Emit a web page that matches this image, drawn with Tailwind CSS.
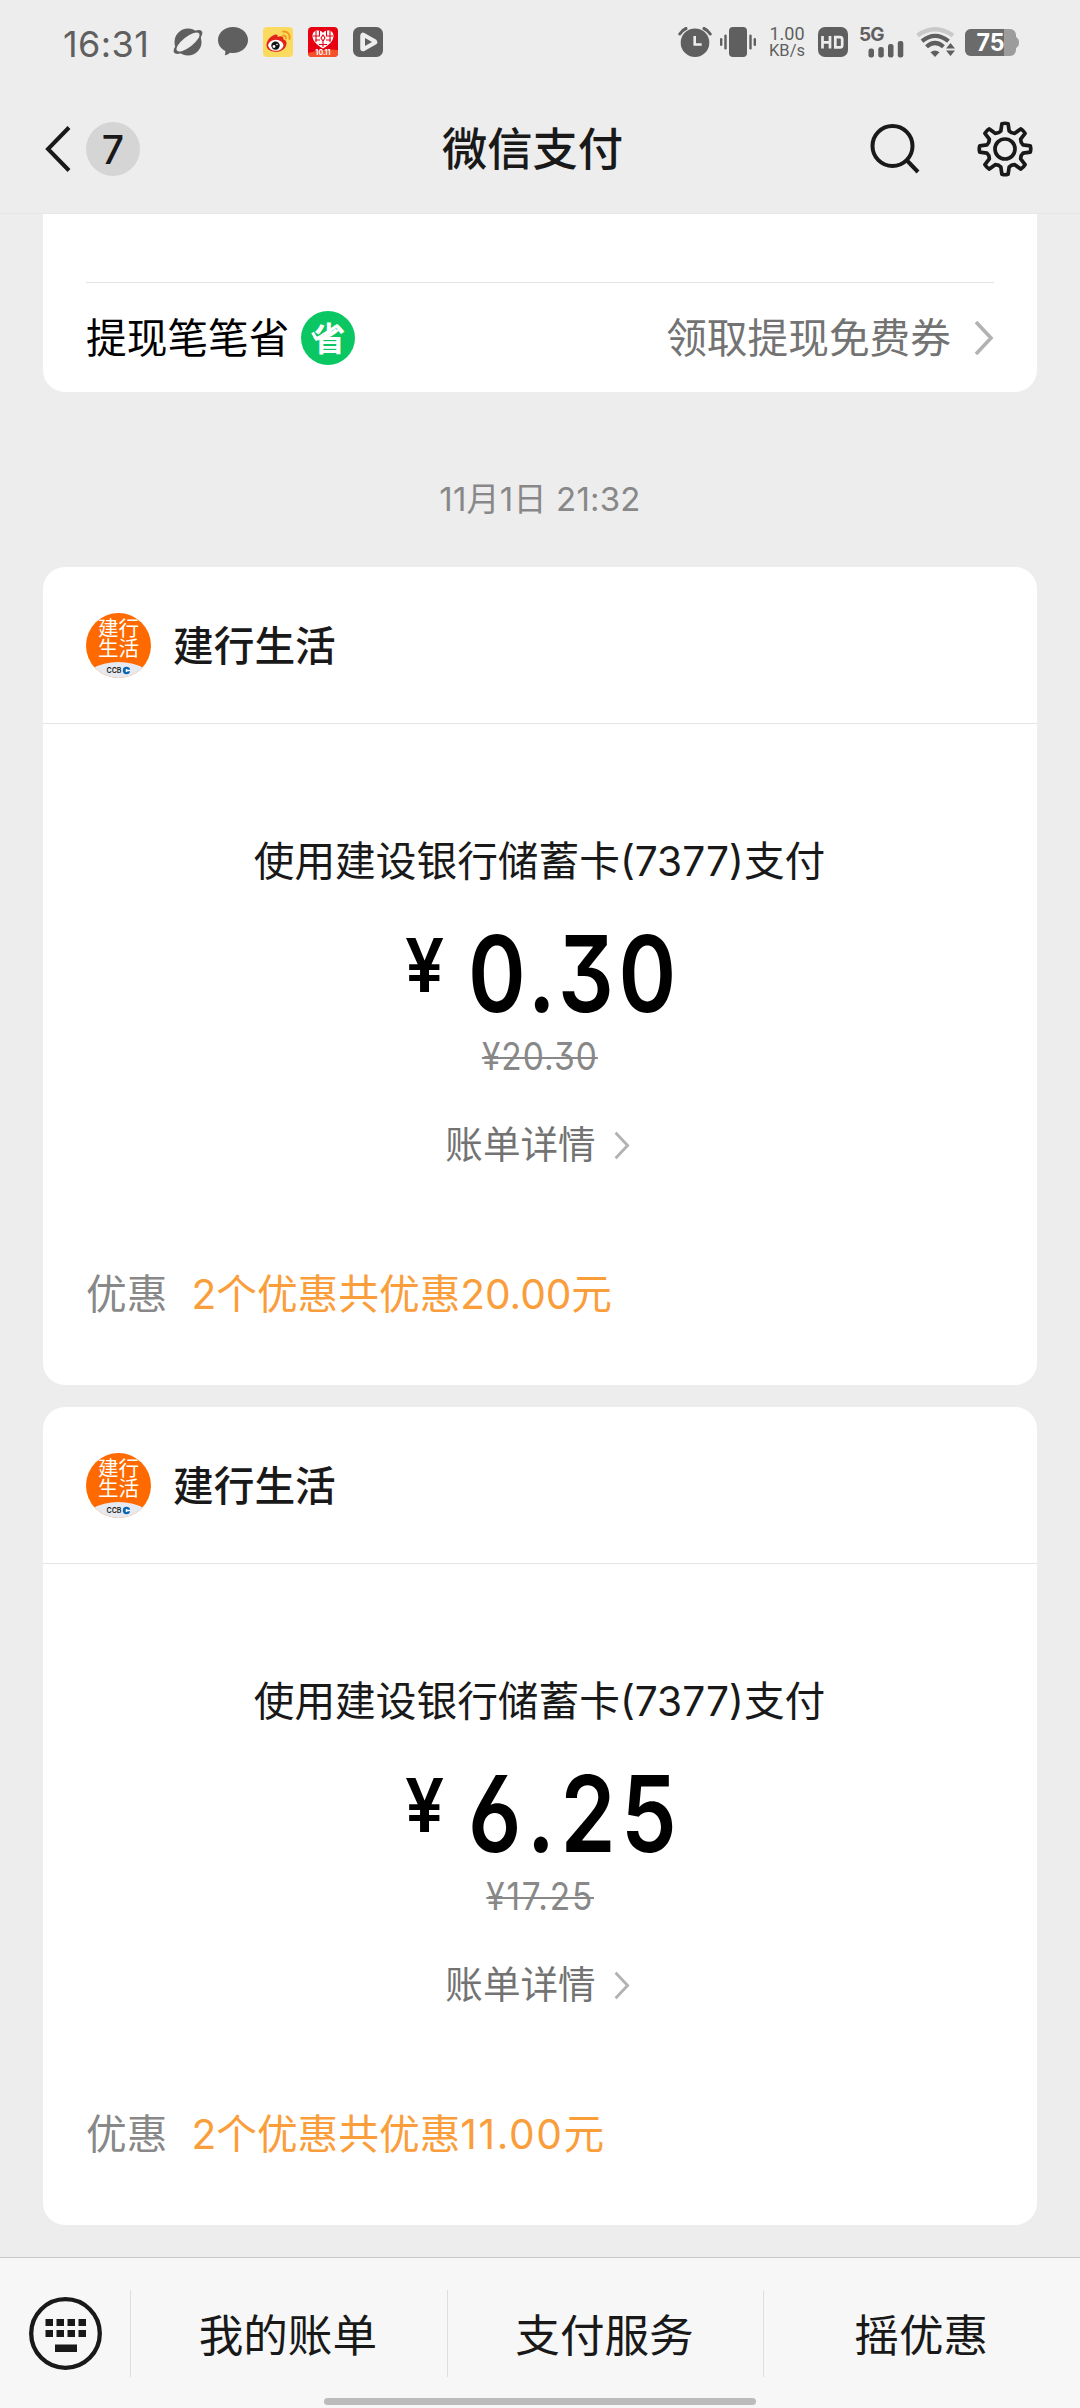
<!DOCTYPE html>
<html lang="zh-CN">
<head>
<meta charset="utf-8">
<title>微信支付</title>
<script src="https://cdn.jsdelivr.net/npm/@tailwindcss/browser@4"></script>
</head>
<body class="bg-[#ededed]">
<svg class="absolute w-0 h-0">
  <defs>
    <symbol id="chevron" viewBox="0 0 20 36"><path d="M2 2 17 18 2 34" fill="none" stroke="#b2b2b2" stroke-width="3.6"/></symbol>
    <clipPath id="disc"><circle cx="32.5" cy="32.5" r="32.5"/></clipPath>
    <symbol id="ccb" viewBox="0 0 65 65">
      <g clip-path="url(#disc)">
        <rect width="65" height="65" fill="#ff6a00"/>
        <ellipse cx="32.5" cy="71" rx="37" ry="22" fill="#e6eaf0"/>
        <g fill="#fff" font-family="Noto Sans CJK SC, sans-serif" font-size="20.5">
          <text x="12" y="22.500">建行</text>
          <text x="12" y="43">生活</text>
        </g>
        <text x="20.500" y="60" font-family="Inter, sans-serif" font-weight="600" font-size="7.500" fill="#222" textLength="15" lengthAdjust="spacingAndGlyphs">CCB</text>
        <circle cx="40.5" cy="57.5" r="3.7" fill="#0a66b0"/>
        <path d="M40 57.500h4.500M40.500 56v3" stroke="#fff" stroke-width="1.500"/>
      </g>
    </symbol>
  </defs>
</svg>

<div class="w-[1080px] h-[2408px] flex flex-col overflow-hidden bg-[#ededed] text-[#191919] font-[Inter,'Noto_Sans_CJK_SC',sans-serif]">

  <!-- status bar -->
  <div class="h-[84px] shrink-0 flex items-center pl-[63px] pr-[61px] text-[#5f5f5f]">
    <div class="w-[110px] pt-1 text-[36px] leading-[40px] tracking-[0.4px] whitespace-nowrap">16:31</div>
    <div class="flex items-center gap-[15px]">
      <svg class="w-[30px] h-[30px]" viewBox="0 0 30 30">
        <circle cx="15" cy="15" r="13.5" fill="#5f5f5f"/>
        <ellipse cx="15" cy="15" rx="17.5" ry="6.300" transform="rotate(-38 15 15)" fill="#5f5f5f"/>
        <ellipse cx="15" cy="15" rx="14" ry="5.200" transform="rotate(-38 15 15)" fill="#ededed"/>
      </svg>
      <svg class="w-[30px] h-[30px]" viewBox="0 0 30 30"><path d="M15 0c8.500 0 15 5.700 15 13s-6.500 13-15 13c-1 0-2 0-3-.3C10.500 27 8.500 28 6.800 28.300c.5-1.200.7-2.700.5-4.300C2.800 21.700 0 17.700 0 13 0 5.700 6.500 0 15 0Z" fill="#5f5f5f"/></svg>
      <svg class="w-[30px] h-[30px]" viewBox="0 0 30 30">
        <rect width="30" height="30" rx="4" fill="#fbdb5f"/>
        <path d="M3.500 18C3.500 13 9 8 12.500 7.500c2-.3 2.500 1 2 2.500 3-1.500 6.500-1 5.800 2.200 2.500.8 3.200 2.300 3.200 4 0 5-5 8.600-10.500 8.600S3.500 22.500 3.500 18Z" fill="#e2231a"/>
        <ellipse cx="12.800" cy="18.300" rx="7.600" ry="5.500" fill="#fff"/>
        <circle cx="12.500" cy="18.600" r="4.200" fill="#111"/><circle cx="11" cy="19.500" r="1.400" fill="#fff"/><circle cx="14" cy="17.500" r=".8" fill="#fff"/>
        <path d="M20 4.500c4.500-.5 7.500 3 6.500 7.500M20 8.500c2-.2 3.300 1.200 2.900 3" fill="none" stroke="#f39a1e" stroke-width="1.900" stroke-linecap="round"/>
      </svg>
      <svg class="w-[30px] h-[30px]" viewBox="0 0 30 30">
        <rect width="30" height="30" rx="4" fill="#e60012"/>
        <path d="M0 26q15-5 30-3v3a4 4 0 0 1-4 4H4a4 4 0 0 1-4-4Z" fill="#f4502a"/>
        <path d="M15 21.500C9 18 4.500 14 4.500 9c0-6 7.500-7 10.500-3 3-4 10.500-3 10.500 3 0 5-4.500 9-10.500 12.500Z" fill="#fff"/>
        <path d="M8 4v11M11.500 3.500v5M18.500 3.500v5M22 4v11M5 9h7M18 9h7M7 13h5M18 13h5M11 17.500h8M13 11l2-3 2 3-2 3ZM15 14v6" stroke="#e60012" stroke-width="1.100" fill="none"/>
        <text x="15" y="28.300" text-anchor="middle" font-size="7" font-weight="700" fill="#fff" font-family="Inter, sans-serif">10.11</text>
      </svg>
      <svg class="w-[30px] h-[30px]" viewBox="0 0 30 30">
        <rect width="30" height="30" rx="6.500" fill="#5f5f5f"/>
        <path d="M10 8.500v13L21.500 15Z" fill="#ededed" stroke="#ededed" stroke-width="5.500" stroke-linejoin="round"/>
        <path d="M12 11v8l7-4Z" fill="#5f5f5f"/>
      </svg>
    </div>
    <div class="ml-auto flex items-center">
      <svg class="w-[34px] h-[30px]" viewBox="0 0 34 30">
        <circle cx="17" cy="15.700" r="14.300" fill="#5f5f5f"/>
        <path d="M1.800 7A13 13 0 0 1 8 1.500M32.200 7A13 13 0 0 0 26 1.500" stroke="#5f5f5f" stroke-width="3" stroke-linecap="round"/>
        <path d="M16.700 9v8.500h7" fill="none" stroke="#ededed" stroke-width="2.600"/>
      </svg>
      <svg class="w-[36px] h-[30px] ml-[8px]" viewBox="0 0 36 30" fill="#5f5f5f">
        <rect x="9" width="18" height="30" rx="4"/><rect x="4.300" y="7.500" width="2.400" height="15" rx="1.200"/><rect x="0" y="11" width="2.400" height="8" rx="1.200"/><rect x="29.300" y="7.500" width="2.400" height="15" rx="1.200"/><rect x="33.600" y="11" width="2.400" height="8" rx="1.200"/>
      </svg>
      <div class="ml-[13px] w-[36px] text-center font-[Roboto,sans-serif] whitespace-nowrap">
        <div class="text-[18px] leading-[16px] h-[16px]">1.00</div>
        <div class="text-[16.5px] leading-[17px] h-[16px]">KB/s</div>
      </div>
      <svg class="w-[30px] h-[30px] ml-[13px]" viewBox="0 0 30 30">
        <rect width="30" height="30" rx="7" fill="#5f5f5f"/>
        <path d="M4.500 9v12.500M12 9v12.500M4.500 15.300h7.500M17.300 9v12.500M16 10.200h6q2.200 0 2.200 2.200v5.800q0 2.200-2.200 2.200h-6" fill="none" stroke="#ededed" stroke-width="2.700"/>
      </svg>
      <div class="relative w-[46px] h-[32px] ml-[11px]">
        <span class="absolute left-0 -top-[2px] text-[19px] leading-[22px] font-bold tracking-[-1px]">5G</span>
        <svg class="w-[46px] h-[32px]" viewBox="0 0 46 32" fill="#5f5f5f">
          <rect x="9.500" y="22.500" width="5.500" height="9" rx="2.300"/><rect x="19.300" y="21" width="5.500" height="10.500" rx="2.300"/><rect x="29" y="18" width="5.500" height="13.500" rx="2.300"/><rect x="38.800" y="15" width="5.500" height="16.500" rx="2.300"/>
        </svg>
      </div>
      <svg class="w-[40px] h-[30px] ml-[11px]" viewBox="0 0 40 30" fill="none">
        <path d="M1.500 8.500Q19-4 37 8.500" stroke="#c9c9c9" stroke-width="4.200"/>
        <path d="M6 14.200Q19 3.500 32.500 14.200" stroke="#5f5f5f" stroke-width="4.200"/>
        <path d="M10.500 19.700q8.500-7.500 17 0" stroke="#5f5f5f" stroke-width="4.200"/>
        <path d="M14.500 25.200q4.500-3.500 9 0L19 30Z" fill="#5f5f5f"/>
        <path d="M34.500 13.500 42 21l-7.500 9.500L27 21Z" fill="#ededed"/>
        <path d="m34.500 16 4.500 5.500h-9Zm0 13 4.500-5.500h-9Z" fill="#5f5f5f"/>
      </svg>
      <svg class="w-[54px] h-[27px] ml-[9px]" viewBox="0 0 54 27">
        <rect width="51" height="27" rx="6" fill="#9c9c9c"/><path d="M51 8q3 1.500 3 5.500t-3 5.500Z" fill="#9c9c9c"/>
        <path d="M6 0h33v27H6a6 6 0 0 1-6-6V6a6 6 0 0 1 6-6Z" fill="#6b6b6b"/>
        <text x="25.500" y="22.300" text-anchor="middle" font-family="Inter, sans-serif" font-weight="700" font-size="24" fill="#fff" textLength="28" lengthAdjust="spacingAndGlyphs">75</text>
      </svg>
    </div>
  </div>

  <!-- navigation bar -->
  <div class="h-[130px] shrink-0 grid grid-cols-3 items-center border-b border-[#e6e6e6]">
    <div class="flex items-center pl-[44px]">
      <svg class="w-[27px] h-[46px]" viewBox="0 0 27 46"><path d="M25 1.500 4 23 25 44.500" fill="none" stroke="#191919" stroke-width="4"/></svg>
      <div class="ml-[15px] size-[54px] rounded-full bg-[#d5d5d5] text-center text-[39px] leading-[56px] font-medium">7</div>
    </div>
    <div class="justify-self-center -ml-[15px] pt-[3px] text-[45.3px] leading-[60px] font-medium whitespace-nowrap">微信支付</div>
    <div class="flex items-center justify-end pr-[47px]">
      <svg class="w-[50px] h-[50px]" viewBox="0 0 50 50" fill="none" stroke="#191919" stroke-width="4"><circle cx="22.500" cy="22" r="20"/><path d="m36.500 36 11.500 12"/></svg>
      <svg class="w-[56px] h-[56px] ml-[57px]" viewBox="-28 -28 56 56" fill="none" stroke="#191919" stroke-width="3.7" stroke-linejoin="round">
        <circle r="10"/>
        <path id="gear" d=""/>
      </svg>
    </div>
  </div>

  <!-- message list -->
  <div class="h-[2043px] shrink-0 flex flex-col px-[43px]">
    <div class="h-[178px] shrink-0 px-[43px] bg-white rounded-b-[22px]">
      <div class="h-[69px] border-b border-[#e3e3e3]"></div>
      <div class="h-[109px] flex items-center text-[40.7px] leading-[60px] whitespace-nowrap">
        <span class="pt-[3px] text-black">提现笔笔省</span>
        <svg class="ml-[12px] w-[54px] h-[54px]" viewBox="0 0 54 54">
          <circle cx="27" cy="27" r="27" fill="#0ac764"/>
          <text x="28" y="39.500" text-anchor="middle" font-family="Noto Sans CJK SC, sans-serif" font-weight="700" font-size="33" fill="#fff">省</text>
          <path d="m11.500 21.500 4 6.500L35 15.500" fill="none" stroke="#fff" stroke-width="3"/>
        </svg>
        <span class="ml-auto pt-[3px] text-[#737373]">领取提现免费券</span>
        <svg class="ml-[23px] w-[20px] h-[36px]"><use href="#chevron"/></svg>
      </div>
    </div>

    <div class="mt-[87px] h-[40px] text-center text-[33px] leading-[40px] tracking-[0.2px] text-[#888]">11月1日 21:32</div>

    <section class="mt-[48px] h-[818px] shrink-0 bg-white rounded-[22px]">
      <div class="h-[157px] px-[43px] flex items-center border-b border-[#e5e5e5]">
        <svg class="w-[65px] h-[65px]"><use href="#ccb"/></svg>
        <span class="ml-[22px] pt-[3px] text-[40.7px] leading-[60px] font-medium">建行生活</span>
      </div>
      <div class="flex flex-col items-center">
        <div class="mt-[108px] -ml-[1px] h-[60px] text-[40.7px] leading-[60px] whitespace-nowrap">使用建设银行储蓄卡(7377)支付</div>
        <div class="mt-[32px] -ml-[2px] h-[100px] flex text-black whitespace-nowrap">
          <span class="w-[40px] text-[74px] leading-[82px] font-semibold origin-left scale-x-[0.94]">¥</span>
          <span class="ml-[23px] w-[206px] text-[106px] leading-[100px] font-semibold tracking-[5.5px] origin-left scale-x-[0.825] [font-feature-settings:'cv09','cv03']">0.30</span>
        </div>
        <div class="mt-[12px] h-[40px] text-[38px] leading-[40px] tracking-[1.2px] text-[#888] line-through decoration-2 origin-center scale-x-[0.88] [font-feature-settings:'cv09']">¥20.30</div>
        <div class="mt-[44px] -ml-[5px] h-[50px] flex items-center gap-[18px] text-[37.6px] leading-[50px] text-[#737373]">账单详情<svg class="w-[16px] h-[29px]"><use href="#chevron"/></svg></div>
      </div>
      <div class="mt-[100px] px-[43px] flex text-[40.7px] leading-[50px] whitespace-nowrap">
        <span class="text-[#888]">优惠</span><span class="ml-[24px] text-[#fa9d3b]">2个优惠共优惠<span class="tracking-[-0.1px]">20.00</span>元</span>
      </div>
    </section>

    <section class="mt-[22px] h-[818px] shrink-0 bg-white rounded-[22px]">
      <div class="h-[157px] px-[43px] flex items-center border-b border-[#e5e5e5]">
        <svg class="w-[65px] h-[65px]"><use href="#ccb"/></svg>
        <span class="ml-[22px] pt-[3px] text-[40.7px] leading-[60px] font-medium">建行生活</span>
      </div>
      <div class="flex flex-col items-center">
        <div class="mt-[108px] -ml-[1px] h-[60px] text-[40.7px] leading-[60px] whitespace-nowrap">使用建设银行储蓄卡(7377)支付</div>
        <div class="mt-[32px] -ml-[2px] h-[100px] flex text-black whitespace-nowrap">
          <span class="w-[40px] text-[74px] leading-[82px] font-semibold origin-left scale-x-[0.94]">¥</span>
          <span class="ml-[23px] w-[206px] text-[106px] leading-[100px] font-semibold tracking-[6.5px] origin-left scale-x-[0.835] [font-feature-settings:'cv09','cv03']">6.25</span>
        </div>
        <div class="mt-[12px] h-[40px] text-[38px] leading-[40px] tracking-[2px] text-[#888] line-through decoration-2 origin-center scale-x-[0.88] [font-feature-settings:'cv09']">¥17.25</div>
        <div class="mt-[44px] -ml-[5px] h-[50px] flex items-center gap-[18px] text-[37.6px] leading-[50px] text-[#737373]">账单详情<svg class="w-[16px] h-[29px]"><use href="#chevron"/></svg></div>
      </div>
      <div class="mt-[100px] px-[43px] flex text-[40.7px] leading-[50px] whitespace-nowrap">
        <span class="text-[#888]">优惠</span><span class="ml-[24px] text-[#fa9d3b]">2个优惠共优惠<span class="tracking-[1.6px]">11.00</span>元</span>
      </div>
    </section>
  </div>

  <!-- bottom menu -->
  <div class="relative h-[151px] shrink-0 flex items-start border-t border-[#c8c8c8] bg-[#f7f7f7] pt-[32px]">
    <div class="w-[130px] h-[87px] pl-[29px] flex items-center">
      <svg class="w-[73px] h-[73px]" viewBox="0 0 73 73" fill="#191919">
        <circle cx="36.5" cy="36.5" r="34.300" fill="none" stroke="#191919" stroke-width="4.300"/>
        <path d="M16.500 22H24v7h-7.500zM27.500 22H35v7h-7.500zM38.500 22H46v7h-7.500zM49.500 22H57v7h-7.500zM16.500 33H24v7h-7.500zM27.500 33H35v7h-7.500zM38.500 33H46v7h-7.500zM49.500 33H57v7h-7.500zM26 47.500h22v7.500H26z"/>
      </svg>
    </div>
    <div class="flex-1 h-[87px] border-l border-[#dedede] pr-[2px] text-center text-[44.6px] leading-[92px]">我的账单</div>
    <div class="flex-1 h-[87px] border-l border-[#dedede] pr-[2px] text-center text-[44.6px] leading-[92px]">支付服务</div>
    <div class="flex-1 h-[87px] border-l border-[#dedede] pr-[2px] text-center text-[44.6px] leading-[92px]">摇优惠</div>
    <div class="absolute left-[324px] bottom-[3px] w-[432px] h-[7px] rounded-full bg-[#bbb]"></div>
  </div>
</div>
<script>
  // eight-tooth gear outline
  let d = '';
  for (let i = 0; i < 8; i++) {
    const p = (r, a) => { const t = (i * 45 + a) * Math.PI / 180; return (r * Math.sin(t)).toFixed(2) + ' ' + (-r * Math.cos(t)).toFixed(2); };
    d += (i ? 'L' : 'M') + p(18.5, -13) + 'L' + p(25.5, -7) + 'Q' + p(26.2, 0) + ' ' + p(25.5, 7) + 'L' + p(18.5, 13) + 'Q' + p(16.8, 22.5) + ' ' + p(18.5, 32);
  }
  document.getElementById('gear').setAttribute('d', d + 'Z');
</script>
</body>
</html>
